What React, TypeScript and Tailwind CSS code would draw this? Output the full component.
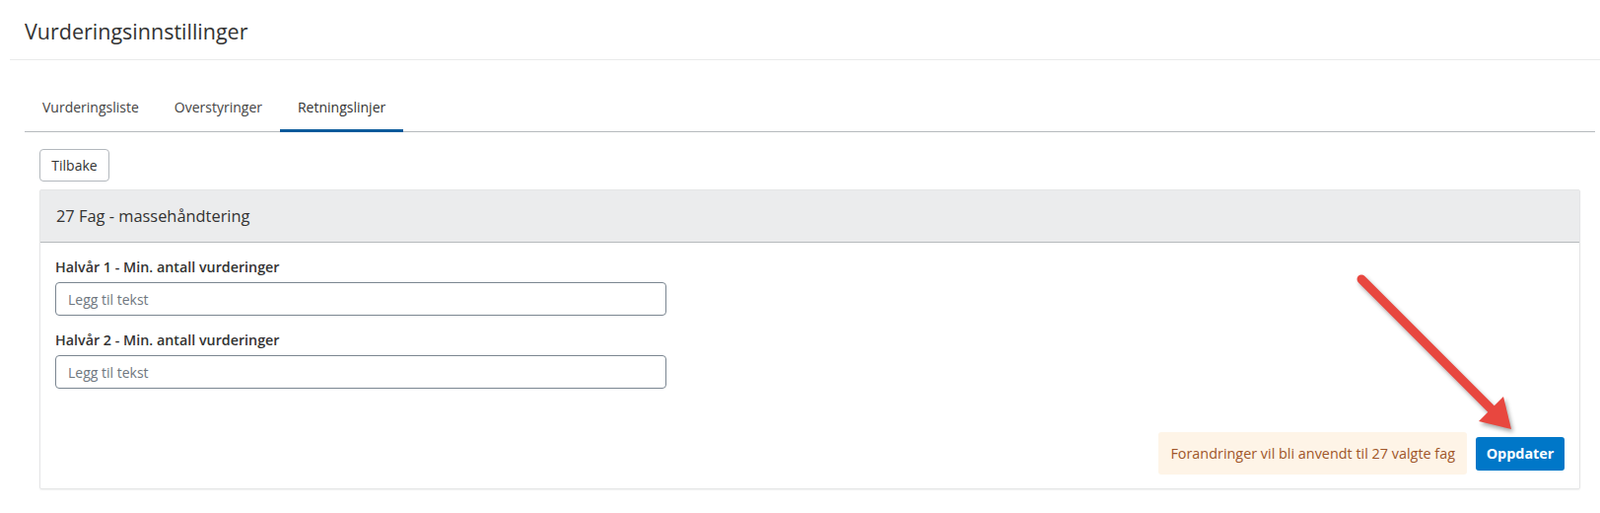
import React from "react";

export default function App() {
  return (
    <div className="relative w-[1623px] h-[520px] bg-white font-['Open_Sans',sans-serif] text-[#333]">
      <div className="ml-[10px] h-[61px] border-b border-[#e9eaeb] pl-[15px] pt-[18px]">
        <h1 className="text-[21.5px] leading-[28px] text-[#333]">Vurderingsinnstillinger</h1>
      </div>

      <div className="ml-[25px] mr-[5px] mt-[24px] flex border-b border-[#b6babe]">
        <div className="px-[18px] pt-[14px] pb-[14px] text-[14px] leading-[20px] text-[#444]">Vurderingsliste</div>
        <div className="px-[18px] pt-[14px] pb-[14px] text-[14px] leading-[20px] text-[#444]">Overstyringer</div>
        <div className="-mb-px px-[18px] pt-[14px] pb-[12px] text-[14px] leading-[20px] text-[#333] border-b-[3px] border-[#0b5a9b]">Retningslinjer</div>
      </div>

      <div className="ml-[40px] mr-[20px] mt-[17px]">
        <button className="h-[33px] w-[71px] rounded-[4px] border border-[#b3b8bd] bg-white text-[14px] text-[#333]">Tilbake</button>

        <div className="mt-[8px] border border-[#e4e5e6] rounded-[2px] shadow-[0_1px_2px_rgba(0,0,0,0.06)]">
          <div className="h-[53px] bg-[#ebeced] border-b border-[#b5b9bc] pl-[16px] flex items-center">
            <span className="text-[16.4px] text-[#333]">27 Fag - massehåndtering</span>
          </div>
          <div className="px-[15px] pt-[15px] pb-[14px]">
            <label className="block text-[14.3px] leading-[20px] font-semibold text-[#333]">Halvår 1 - Min. antall vurderinger</label>
            <input
              placeholder="Legg til tekst"
              className="mt-[5px] block h-[34px] w-[620px] rounded-[4px] border border-[#7b8691] px-[12px] text-[14px] placeholder:text-[#6f7780] outline-none"
            />
            <label className="mt-[15px] block text-[14.3px] leading-[20px] font-semibold text-[#333]">Halvår 2 - Min. antall vurderinger</label>
            <input
              placeholder="Legg til tekst"
              className="mt-[5px] block h-[34px] w-[620px] rounded-[4px] border border-[#7b8691] px-[12px] text-[14px] placeholder:text-[#6f7780] outline-none"
            />
            <div className="mt-[44px] flex items-center justify-end gap-[9px]">
              <div className="h-[43px] rounded-[3px] bg-[#fef4e7] px-[12px] flex items-center text-[14.4px] text-[#a0562a]">
                Forandringer vil bli anvendt til 27 valgte fag
              </div>
              <button className="h-[34px] w-[90px] rounded-[3px] bg-[#0077c8] text-[14.4px] font-bold text-white">Oppdater</button>
            </div>
          </div>
        </div>
      </div>

      <svg
        className="pointer-events-none absolute left-0 top-0"
        width="1623"
        height="520"
        style={{ filter: "drop-shadow(2px 3px 2px rgba(0,0,0,0.35))" }}
      >
        <line x1="1381" y1="283" x2="1515" y2="417" stroke="#e8473f" strokeWidth="9" strokeLinecap="round" />
        <polygon points="1533,435 1500,427 1525,402" fill="#e8473f" />
      </svg>
    </div>
  );
}
